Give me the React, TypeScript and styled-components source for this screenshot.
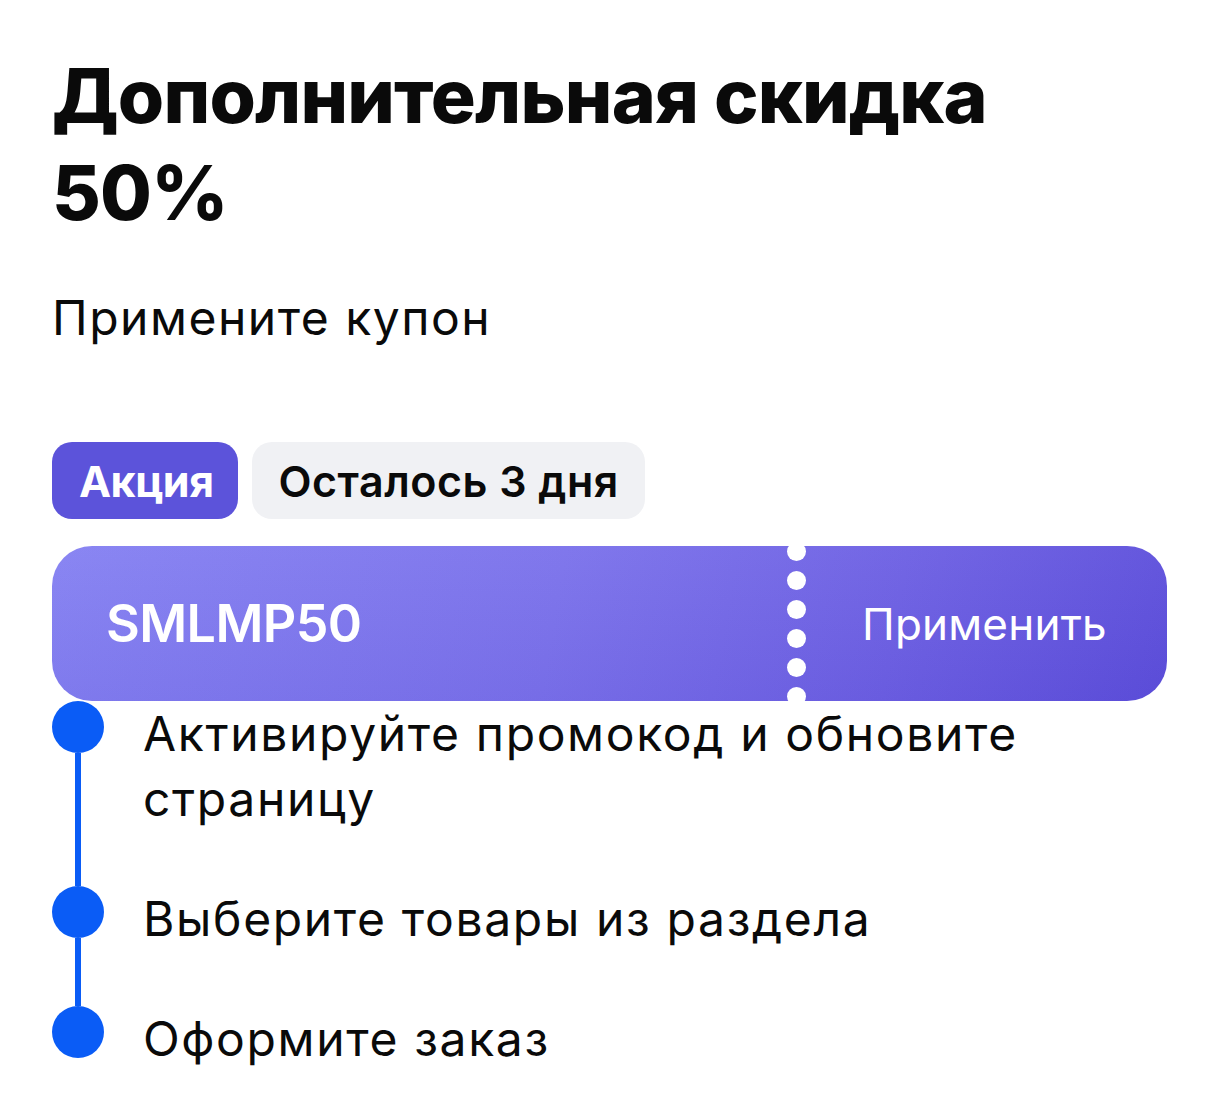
import React from "react";
import styled, { createGlobalStyle } from "styled-components";

const GlobalStyle = createGlobalStyle`
  html, body { margin: 0; padding: 0; background: #ffffff; }
  body { font-family: "Inter", "Liberation Sans", sans-serif; color: #0b0b0b; }
  * { box-sizing: border-box; }
`;

const Page = styled.main`
  width: 1219px;
  padding: 47px 52px 0 52px;
  display: flex;
  flex-direction: column;
`;

const Title = styled.h1`
  margin: 0;
  font-family: "Inter", "Liberation Sans", sans-serif;
  font-weight: 800;
  font-size: 75px;
  line-height: 97px;
  letter-spacing: -0.8px;
  color: #0a0a0a;
  max-width: 980px;
`;

const Subtitle = styled.p`
  margin: 48px 0 0 0;
  font-family: "Inter", "Liberation Sans", sans-serif;
  font-weight: 400;
  font-size: 48px;
  line-height: 58px;
  letter-spacing: 1.5px;
  color: #0a0a0a;
`;

const Tags = styled.div`
  display: flex;
  gap: 14px;
  margin-top: 95px;
`;

const Tag = styled.span<{ $variant: "accent" | "muted" }>`
  display: inline-flex;
  align-items: center;
  height: 77px;
  padding: ${(p) => (p.$variant === "accent" ? "0 25px 0 27px" : "0 26px 0 26px")};
  border-radius: 20px;
  font-family: "Inter", "Liberation Sans", sans-serif;
  font-weight: ${(p) => (p.$variant === "accent" ? 700 : 600)};
  font-size: 43px;
  letter-spacing: ${(p) => (p.$variant === "accent" ? "-0.5px" : "0.5px")};
  background: ${(p) => (p.$variant === "accent" ? "#5c53da" : "#f0f1f4")};
  color: ${(p) => (p.$variant === "accent" ? "#ffffff" : "#0a0a0a")};
`;

const Coupon = styled.div`
  margin-top: 27px;
  height: 155px;
  border-radius: 40px;
  display: flex;
  align-items: center;
  color: #ffffff;
  background:
    linear-gradient(180deg, rgba(255, 255, 255, 0.04) 0%, rgba(40, 20, 160, 0.06) 100%),
    linear-gradient(100deg, #8581f2 0%, #7b72eb 45%, #6d60e3 75%, #5d4fdb 100%);
`;

const Code = styled.div`
  flex: 1;
  padding-left: 54px;
  font-family: "Inter", "Liberation Sans", sans-serif;
  font-weight: 600;
  font-size: 52px;
  letter-spacing: -0.6px;
`;

const Perforation = styled.div`
  display: flex;
  flex-direction: column;
  gap: 10px;
  flex-shrink: 0;
`;

const Hole = styled.span`
  display: block;
  width: 19px;
  height: 19px;
  border-radius: 50%;
  background: #ffffff;
`;

const Apply = styled.button`
  width: 361px;
  flex-shrink: 0;
  padding: 0 0 0 56px;
  border: none;
  background: transparent;
  text-align: left;
  color: #ffffff;
  font-family: "Inter", "Liberation Sans", sans-serif;
  font-weight: 400;
  font-size: 44px;
  letter-spacing: 0.2px;
  cursor: pointer;
`;

const Steps = styled.ol`
  list-style: none;
  margin: 0;
  padding: 0;
  display: flex;
  flex-direction: column;
`;

const Step = styled.li`
  display: grid;
  grid-template-columns: 52px 1fr;
  column-gap: 39px;
`;

const Marker = styled.div`
  display: flex;
  flex-direction: column;
  align-items: center;
`;

const Dot = styled.span`
  width: 52px;
  height: 52px;
  border-radius: 50%;
  background: #0a5cf6;
  flex-shrink: 0;
`;

const Line = styled.span`
  flex: 1;
  width: 6px;
  background: #0a5cf6;
`;

const StepText = styled.p<{ $last?: boolean }>`
  margin: 0;
  padding-bottom: ${(p) => (p.$last ? "0" : "55px")};
  font-family: "Inter", "Liberation Sans", sans-serif;
  font-weight: 400;
  font-size: 48px;
  line-height: 65px;
  letter-spacing: 1.65px;
  color: #0a0a0a;
`;

const steps = [
  "Активируйте промокод и обновите страницу",
  "Выберите товары из раздела",
  "Оформите заказ",
];

export default function App() {
  return (
    <>
      <GlobalStyle />
      <Page>
        <Title>Дополнительная скидка 50%</Title>
        <Subtitle>Примените купон</Subtitle>
        <Tags>
          <Tag $variant="accent">Акция</Tag>
          <Tag $variant="muted">Осталось 3 дня</Tag>
        </Tags>
        <Coupon>
          <Code>SMLMP50</Code>
          <Perforation>
            {Array.from({ length: 6 }).map((_, i) => (
              <Hole key={i} />
            ))}
          </Perforation>
          <Apply type="button">Применить</Apply>
        </Coupon>
        <Steps>
          {steps.map((s, i) => {
            const last = i === steps.length - 1;
            return (
              <Step key={s}>
                <Marker>
                  <Dot />
                  {!last && <Line />}
                </Marker>
                <StepText $last={last}>{s}</StepText>
              </Step>
            );
          })}
        </Steps>
      </Page>
    </>
  );
}
